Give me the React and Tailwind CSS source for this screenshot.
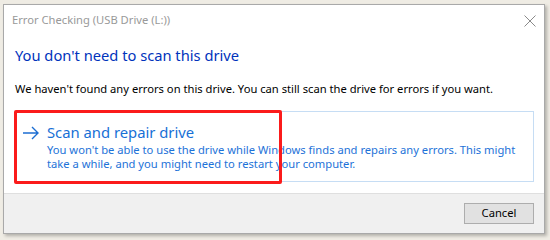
export default function App() {
  return (
    <div className="w-[550px] h-[240px] bg-[#efece4] relative overflow-hidden" style={{ fontFamily: '"Noto Sans", "Open Sans", sans-serif' }}>
      <div className="absolute left-[3px] top-[4px] w-[542px] h-[230px] border border-[#a9a9a9] bg-white flex flex-col shadow-[2px_2px_3px_rgba(0,0,0,0.25)]">
        <div className="h-[30px] flex items-start justify-between">
          <div className="pl-[8px] pt-[7px] text-[11.2px] leading-[16px] text-[#999999] whitespace-nowrap">Error Checking (USB Drive (L:))</div>
          <svg width="12" height="12" viewBox="0 0 12 12" className="mt-[10px] mr-[8px]">
            <path d="M0.5 0.5 L11.5 11.5 M11.5 0.5 L0.5 11.5" stroke="#8a8a8a" strokeWidth="1" />
          </svg>
        </div>
        <div className="flex-1 px-[10px]">
          <div className="pl-[1px] text-[14.7px] leading-[20px] text-[#0033bc] pt-[10px] whitespace-nowrap">You don't need to scan this drive</div>
          <div className="pl-[1px] text-[11.2px] leading-[16px] text-black mt-[16px] whitespace-nowrap">We haven't found any errors on this drive. You can still scan the drive for errors if you want.</div>
          <div className="relative mt-[14px] ml-[1px] h-[71px] border border-[#c6ddf4]">
            <div className="absolute -left-[2px] -top-[2px] w-[268px] h-[74px] border-[3px] border-[#fb1b1b] rounded-[2px]" />
            <div className="flex items-start pl-[6px] pt-[10px]">
              <svg width="18" height="14" viewBox="0 0 18 14" className="mt-[4px] shrink-0">
                <path d="M1 7 H16 M10 1 L16 7 L10 13" stroke="#1c6ed2" strokeWidth="1.4" fill="none" />
              </svg>
              <div className="ml-[7px]">
                <div className="text-[14.8px] leading-[20px] text-[#1770d6] whitespace-nowrap">Scan and repair drive</div>
                <div className="text-[11.2px] leading-[14px] text-[#1d72d8] mt-[1px] whitespace-nowrap">You won't be able to use the drive while Windows finds and repairs any errors. This might<br />take a while, and you might need to restart your computer.</div>
              </div>
            </div>
          </div>
        </div>
        <div className="h-[40px] bg-[#f0f0f0] border-t border-[#dfdfdf] flex items-center justify-end pr-[10px]">
          <div className="w-[70px] h-[21px] border border-[#adadad] bg-[#e1e1e1] flex items-center justify-center text-[11.2px] text-black">Cancel</div>
        </div>
      </div>
    </div>
  );
}
